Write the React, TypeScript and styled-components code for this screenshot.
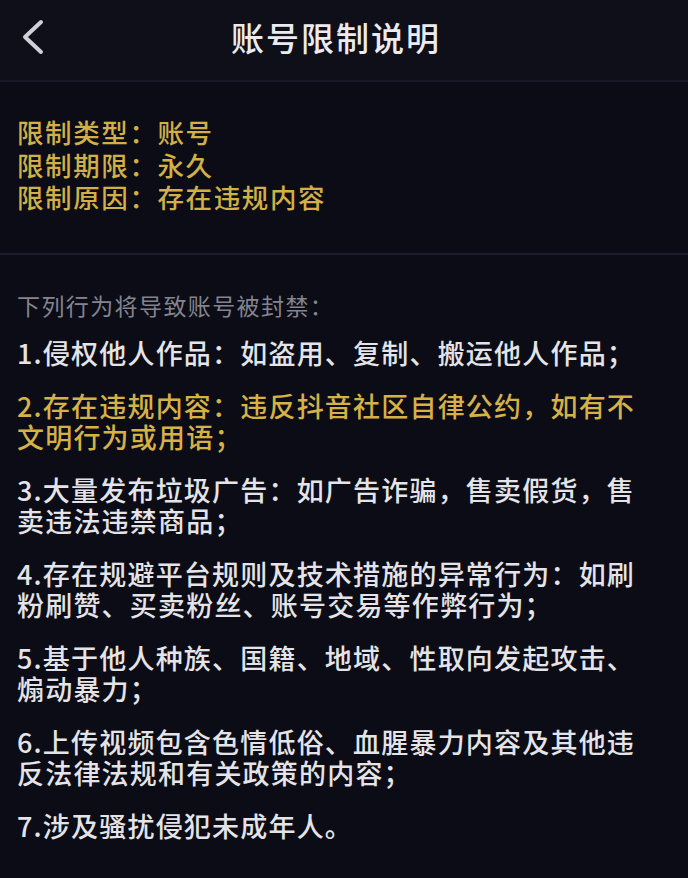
import React from "react";
import styled, { createGlobalStyle } from "styled-components";

const GlobalStyle = createGlobalStyle`
    html, body {
        margin: 0;
        padding: 0;
        background: #0b0c16;
    }
    body {
        font-family: "Noto Sans CJK SC", "Noto Sans", sans-serif;
    }
`;

const Page = styled.div`
        background: #0b0c16;
        display: flex;
        flex-direction: column;
        min-height: 878px;
        width: 688px;
    `;

const Header = styled.header`
        align-items: center;
        background: #0e0f19;
        border-bottom: 2px solid #171826;
        box-sizing: border-box;
        display: flex;
        height: 82px;
        justify-content: center;
        position: relative;
    `;

const BackButton = styled.button`
        background: none;
        border: none;
        cursor: pointer;
        display: flex;
        left: 14px;
        padding: 0;
        position: absolute;
        top: 14px;
    `;

const Title = styled.h1`
        color: #ebebef;
        font-size: 33px;
        font-weight: 500;
        letter-spacing: 2px;
        margin: 0 16px 6px 0;
    `;

const InfoSection = styled.section`
        border-bottom: 2px solid #1b1c2b;
        display: flex;
        flex-direction: column;
        padding: 34px 17px 39px;
    `;

const InfoLine = styled.div`
        color: #d2af47;
        font-size: 26.5px;
        font-weight: 500;
        letter-spacing: 1.6px;
        line-height: 32.5px;
    `;

const RulesSection = styled.section`
        display: flex;
        flex-direction: column;
        gap: 22px;
        padding: 35px 17px 0;
    `;

const Lead = styled.p`
        color: #83848e;
        font-size: 23px;
        letter-spacing: 1.4px;
        line-height: 30px;
        margin: 0 0 -5px;
    `;

const Rule = styled.p<{ $highlight?: boolean }>`
        color: ${(props) => (props.$highlight ? "#d6b146" : "#e4e4e8")};
        font-size: 27px;
        font-weight: 500;
        letter-spacing: 1.2px;
        line-height: 31px;
        margin: 0;
        width: 632px;
    `;

const BackIcon = () => (
    <svg width="36" height="44" viewBox="0 0 36 44" fill="none">
        <path
            d="M27 8 L11 23 L27 38"
            stroke="#cfd0d8"
            strokeWidth="4"
            strokeLinecap="round"
            strokeLinejoin="round"
        />
    </svg>
);

const info = ["限制类型：账号", "限制期限：永久", "限制原因：存在违规内容"];

const rules = [
    { text: "1.侵权他人作品：如盗用、复制、搬运他人作品；" },
    { text: "2.存在违规内容：违反抖音社区自律公约，如有不文明行为或用语；", highlight: true },
    { text: "3.大量发布垃圾广告：如广告诈骗，售卖假货，售卖违法违禁商品；" },
    { text: "4.存在规避平台规则及技术措施的异常行为：如刷粉刷赞、买卖粉丝、账号交易等作弊行为；" },
    { text: "5.基于他人种族、国籍、地域、性取向发起攻击、煽动暴力；" },
    { text: "6.上传视频包含色情低俗、血腥暴力内容及其他违反法律法规和有关政策的内容；" },
    { text: "7.涉及骚扰侵犯未成年人。" },
];

export default function App() {
    return (
        <>
            <GlobalStyle />
            <Page>
                <Header>
                    <BackButton aria-label="返回">
                        <BackIcon />
                    </BackButton>
                    <Title>账号限制说明</Title>
                </Header>
                <InfoSection>
                    {info.map((line) => (
                        <InfoLine key={line}>{line}</InfoLine>
                    ))}
                </InfoSection>
                <RulesSection>
                    <Lead>下列行为将导致账号被封禁：</Lead>
                    {rules.map((r) => (
                        <Rule key={r.text} $highlight={r.highlight}>
                            {r.text}
                        </Rule>
                    ))}
                </RulesSection>
            </Page>
        </>
    );
}
